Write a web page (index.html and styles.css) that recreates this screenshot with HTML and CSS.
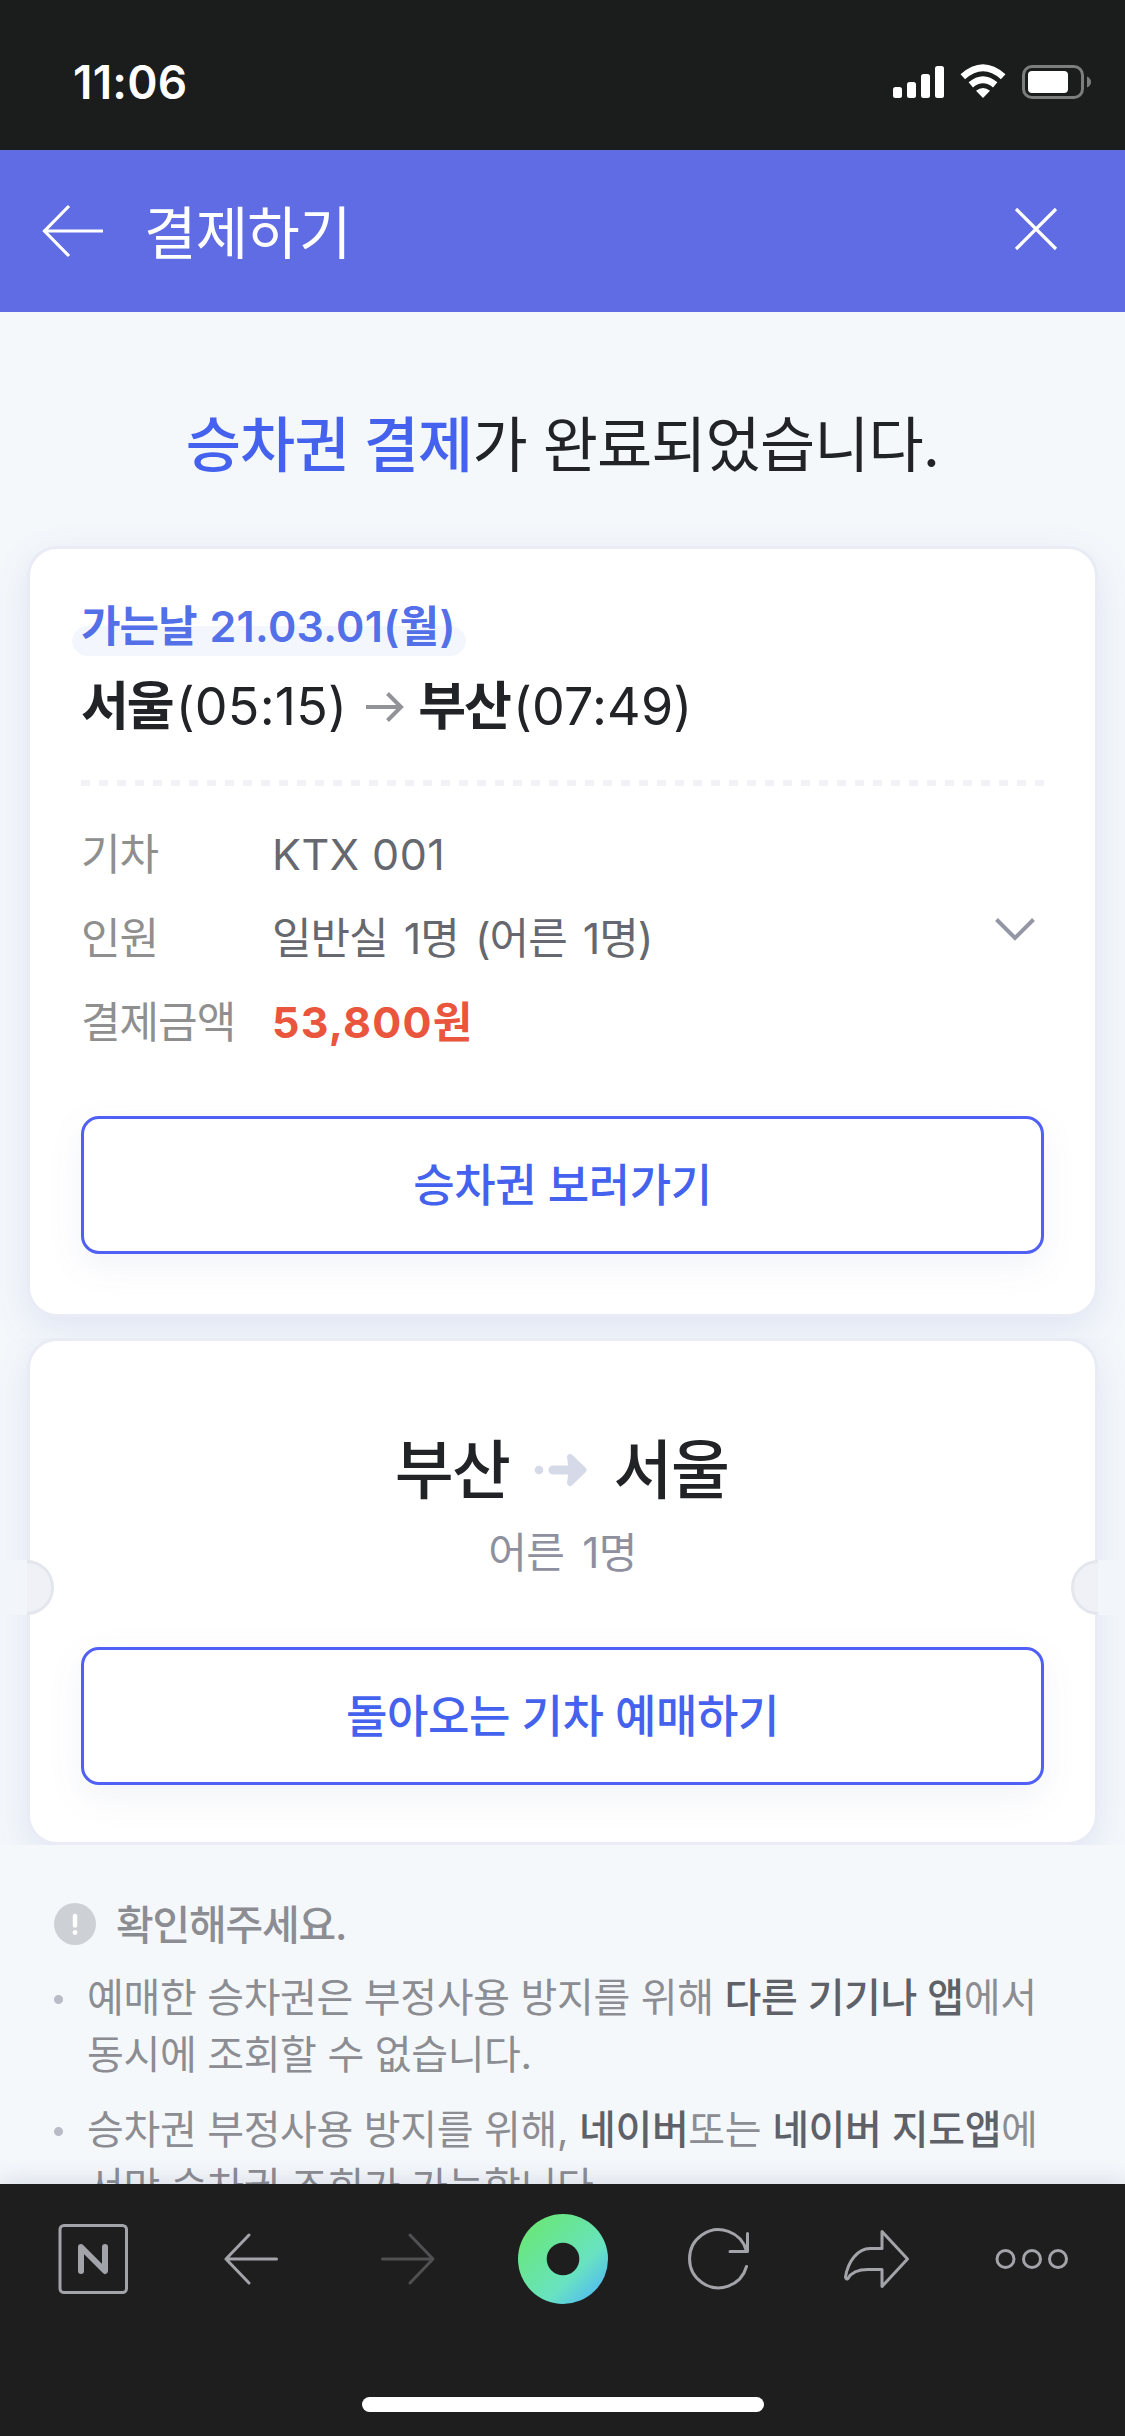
FILE: index.html
```html
<!DOCTYPE html>
<html lang="ko">
<head>
<meta charset="utf-8">
<title>결제하기</title>
<link rel="stylesheet" href="styles.css">
</head>
<body>
<div class="status">
  <span class="time">11:06</span>
  <svg class="status-icons" viewBox="893 60 200 44" width="200" height="44">
    <g fill="#fff">
      <rect x="893" y="87" width="9" height="11" rx="2.5"/>
      <rect x="907" y="82" width="9" height="16" rx="2.5"/>
      <rect x="921" y="74" width="9" height="24" rx="2.5"/>
      <rect x="935" y="66" width="9" height="32" rx="2.5"/>
      <path d="M983 98l-7-7.300q7-5.500 14 0z"/>
    </g>
    <path d="M962.800 76.800Q983 58.800 1003.200 76.800M970.800 84.800Q983 74.600 995.200 84.800" fill="none" stroke="#fff" stroke-width="6.800"/>
    <rect x="1023.500" y="66.500" width="59" height="31" rx="8.500" fill="none" stroke="#7c7d7d" stroke-width="3"/>
    <rect x="1028" y="71" width="40" height="22" rx="4" fill="#fff"/>
    <path d="M1087 76.500q4 2 4 5.500t-4 5.500z" fill="#7c7d7d"/>
  </svg>
</div>
<header class="header">
  <svg width="64" height="56" viewBox="0 0 64 56"><path d="M28 3L3.500 28 28 53M3.500 28H62" fill="none" stroke="#fff" stroke-width="3.200"/></svg>
  <h1 class="header-title">결제하기</h1>
  <svg class="close" width="44" height="44" viewBox="0 0 44 44"><path d="M2 2L42 42M42 2L2 42" fill="none" stroke="#fff" stroke-width="3.200"/></svg>
</header>
<main class="content">
  <h2 class="headline"><span class="headline-accent">승차권 결제</span>가 완료되었습니다.</h2>
  <section class="card">
    <p class="date"><span class="date-chip">가는날 <span class="date-value">21.03.01(월)</span></span></p>
    <p class="route">
      <b>서울</b><span class="route-time">(05:15)</span>
      <svg class="route-arrow" width="40" height="32" viewBox="0 0 40 32"><path d="M1 16H36M22.500 2.500L36 16 22.500 29.500" fill="none" stroke="#929397" stroke-width="4"/></svg>
      <b>부산</b><span class="route-time">(07:49)</span>
    </p>
    <svg class="divider" width="963" height="6"><path d="M0 3H963" stroke="#f1f1f6" stroke-width="6" stroke-dasharray="9 9"/></svg>
    <div class="details">
      <dl class="rows">
        <dt>기차</dt><dd class="latin">KTX 001</dd>
        <dt>인원</dt><dd class="party">일반실 1명 (어른 1명)</dd>
        <dt>결제금액</dt><dd class="price">53,800원</dd>
      </dl>
      <svg class="chevron" width="42" height="26" viewBox="0 0 42 26"><path d="M2.500 2.500L21 21 39.500 2.500" fill="none" stroke="#9496a6" stroke-width="4"/></svg>
    </div>
    <a class="button">승차권 보러가기</a>
  </section>
  <div class="return-wrap">
    <section class="card return">
      <i class="notch notch-left"></i><i class="notch notch-right"></i>
      <p class="trip"><span>부산</span>
        <svg width="56" height="34" viewBox="0 0 56 34"><g fill="#d5d9e8"><circle cx="5" cy="17" r="4.300"/><path d="M19 12.500H38V21.500H19a4.500 4.500 0 0 1 0-9z"/></g><path d="M36 4L49.500 17 36 30Q38.500 17 36 4z" fill="#d5d9e8" stroke="#d5d9e8" stroke-width="6" stroke-linejoin="round"/></svg>
        <span>서울</span></p>
      <p class="people">어른 1명</p>
      <a class="button">돌아오는 기차 예매하기</a>
    </section>
  </div>
  <section class="notes">
    <h3 class="notes-title">
      <svg width="42" height="42" viewBox="0 0 42 42"><circle cx="21" cy="21" r="21" fill="#cdd0d5"/><path d="M21 13V22.500" stroke="#fff" stroke-width="4.500" stroke-linecap="round"/><circle cx="21" cy="29.500" r="2.400" fill="#fff"/></svg>
      <span>확인해주세요.</span>
    </h3>
    <ul class="notes-list">
      <li>예매한 승차권은 부정사용 방지를 위해 <b>다른 기기나 앱</b>에서<br>동시에 조회할 수 없습니다.</li>
      <li>승차권 부정사용 방지를 위해, <b>네이버</b>또는 <b>네이버 지도앱</b>에<br>서만 승차권 조회가 가능합니다.</li>
    </ul>
  </section>
</main>
<nav class="toolbar">
  <svg width="1125" height="150" viewBox="0 2184 1125 150">
    <defs><linearGradient id="ring" x1="0.150" y1="0.150" x2="0.900" y2="0.900"><stop offset="0" stop-color="#69e67c"/><stop offset=".65" stop-color="#68e3c0"/><stop offset="1" stop-color="#52bcf0"/></linearGradient></defs>
    <g fill="none" stroke="#a3a3aa" stroke-width="3" stroke-linecap="round" stroke-linejoin="round">
      <rect x="60" y="2225.500" width="66.500" height="67" rx="4"/>
      <path d="M81 2271V2247L105 2271V2247" stroke-width="6"/>
      <path d="M249 2235L226 2259 249 2283M226 2259H276.500"/>
      <path d="M410 2235L433 2259 410 2283M433 2259H382.500" stroke="#505052"/>
      <path d="M746.500 2266.500A29 29 0 1 1 746.500 2251M747.500 2233.500V2251.500H730"/>
      <path d="M882 2231.500L907.500 2259 882 2286.500V2269.500H868C858 2269.500 851 2273 848 2278.500 847 2279.500 845.500 2278.500 845.500 2277 848 2261 858 2248.500 870 2248.500H882z"/>
      <circle cx="1005.500" cy="2259" r="8.500"/><circle cx="1032" cy="2259" r="8.500"/><circle cx="1058" cy="2259" r="8.500"/>
    </g>
    <circle cx="563" cy="2259" r="45" fill="url(#ring)"/>
    <circle cx="563" cy="2259" r="16.300" fill="#1e1e1e"/>
  </svg>
  <div class="home-indicator"></div>
</nav>
</body>
</html>
```
FILE: styles.css
```css
* { box-sizing: border-box; margin: 0; padding: 0; }

body {
  display: flex;
  flex-direction: column;
  width: 1125px;
  height: 2436px;
  overflow: hidden;
  background: #f4f8fb;
  color: #222326;
  font-family: Inter, "Noto Sans CJK KR", sans-serif;
  white-space: nowrap;
}

svg { display: block; flex: none; }

/* Status bar */
.status {
  display: flex;
  flex: none;
  justify-content: space-between;
  align-items: center;
  height: 150px;
  padding: 14px 32px 0 73px;
  background: #1b1c1c;
  color: #fff;
}
.time { font-size: 46px; font-weight: 600; letter-spacing: 0.2px; }

/* Title bar */
.header {
  display: flex;
  flex: none;
  align-items: center;
  height: 162px;
  padding: 0 67px 0 41px;
  background: #606ce4;
  color: #fff;
}
.header-title {
  margin: 5px 0 0 39px;
  font-size: 57px;
  font-weight: 400;
  letter-spacing: -0.8px;
  line-height: 80px;
}
.close { margin: -4px 0 0 auto; }

/* Scrolling content */
.content { flex: none; height: 1872px; overflow: hidden; }

.headline {
  margin-top: 93px;
  font-size: 60px;
  font-weight: 400;
  letter-spacing: -0.9px;
  line-height: 80px;
  text-align: center;
}
.headline-accent { color: #4462ed; font-weight: 500; }

.card {
  margin: 61px 27px 0;
  padding: 0 51px;
  border: 3px solid #e9ebf5;
  border-radius: 30px;
  background: #fff;
  box-shadow: 0 12px 36px rgba(84, 100, 190, 0.13);
}
.content > .card { height: 771px; }

.date { height: 108px; padding-top: 47px; }
.date-chip {
  display: inline-block;
  margin-left: -9px;
  padding: 0 10px 0 9px;
  color: #5370e8;
  font-size: 43px;
  font-weight: 600;
  letter-spacing: -1px;
  line-height: 60px;
  vertical-align: top;
  word-spacing: 3px;
  /* pill behind the lower half of the text */
  border-radius: 15px;
  background:
    radial-gradient(circle at 15px 45px, #f3f7fd 14.5px, transparent 15px) 0 0 / 15px 100% no-repeat,
    radial-gradient(circle at 0 45px, #f3f7fd 14.5px, transparent 15px) 100% 0 / 15px 100% no-repeat,
    linear-gradient(#f3f7fd, #f3f7fd) 50% 100% / calc(100% - 30px) 30px no-repeat;
}
.date-value { letter-spacing: 0.3px; }
.route {
  display: flex;
  align-items: center;
  height: 60px;
  margin-top: 20px;
  font-size: 52px;
  letter-spacing: -2px;
  line-height: 60px;
}
.route-time { margin-left: 3px; letter-spacing: 0.2px; }
.route-arrow { margin: 0 13px 0 18px; }
.divider { margin-top: 43px; }

.details { display: flex; justify-content: space-between; margin-top: 26px; }
.rows {
  display: grid;
  grid-template-columns: 191px auto;
  font-size: 43px;
  letter-spacing: -1px;
  line-height: 84px;
}
.rows dt { color: #8f8f8f; }
.rows dd { color: #66686f; }
.rows .latin { letter-spacing: 0.5px; }
.rows .party { letter-spacing: -1px; word-spacing: 5px; }
.rows .price { color: #ea553d; font-weight: 700; letter-spacing: 1.2px; }
.chevron { margin: 105px 8px 0 0; }

.button {
  display: block;
  height: 138px;
  margin-top: 52px;
  border: 3px solid #505ff4;
  border-radius: 18px;
  background: #fff;
  box-shadow: 0 12px 36px rgba(84, 100, 160, 0.08);
  color: #4462ed;
  font-size: 45px;
  font-weight: 500;
  letter-spacing: -0.4px;
  line-height: 134px;
  text-align: center;
}

/* Return trip ticket; its shadow stays within the ticket's own height */
.return-wrap { margin-top: 21px; overflow: hidden; }
.return { position: relative; height: 507px; margin-top: 0; padding-top: 89px; }
.notch {
  position: absolute;
  top: 219px;
  width: 27px;
  height: 55px;
  border: 3px solid #e4e6ed;
  background: #eff1f6;
}
.notch-left { left: -3px; border-left: 0; border-radius: 0 27px 27px 0; }
.notch-right { right: -3px; border-right: 0; border-radius: 27px 0 0 27px; }
/* page-coloured strip from the notch out to the screen edge */
.notch::before {
  content: "";
  position: absolute;
  top: -3px;
  width: 27px;
  height: 55px;
  background: #f2f5f9;
}
.notch-left::before { right: 100%; margin-right: 0; }
.notch-right::before { left: 100%; }
.trip {
  display: flex;
  justify-content: center;
  align-items: center;
  gap: 24px;
  height: 80px;
  padding-right: 2px;
  font-size: 64px;
  font-weight: 500;
  letter-spacing: -1.5px;
  line-height: 80px;
}
.people {
  margin-top: 13px;
  color: #8e90a0;
  font-size: 42px;
  letter-spacing: -0.7px;
  line-height: 60px;
  text-align: center;
  word-spacing: 7px;
}
.return .button { margin-top: 64px; }

/* Notices */
.notes { padding: 54px 54px 0; color: #8c8d92; }
.notes-title {
  display: flex;
  align-items: center;
  gap: 20px;
  height: 50px;
  font-size: 41px;
  font-weight: 500;
  letter-spacing: -1.2px;
  line-height: 50px;
}
.notes-title span { padding-top: 2px; }
.notes-list { margin-top: 20px; font-size: 40px; letter-spacing: -0.36px; line-height: 57px; list-style: none; }
.notes-list li {
  margin-bottom: 18px;
  padding-left: 33px;
  background: radial-gradient(circle at 4.5px 30.5px, #b9bcc7 4px, transparent 5px);
}
.notes-list b { color: #5f6169; font-weight: 500; }

/* Browser toolbar */
.toolbar {
  position: relative;
  flex: none;
  height: 252px;
  background: #1e1e1e;
  box-shadow: 0 0 24px rgba(60, 60, 110, 0.18);
}
.home-indicator {
  width: 402px;
  height: 15px;
  margin: 63px auto 0;
  border-radius: 8px;
  background: #fff;
}
```
